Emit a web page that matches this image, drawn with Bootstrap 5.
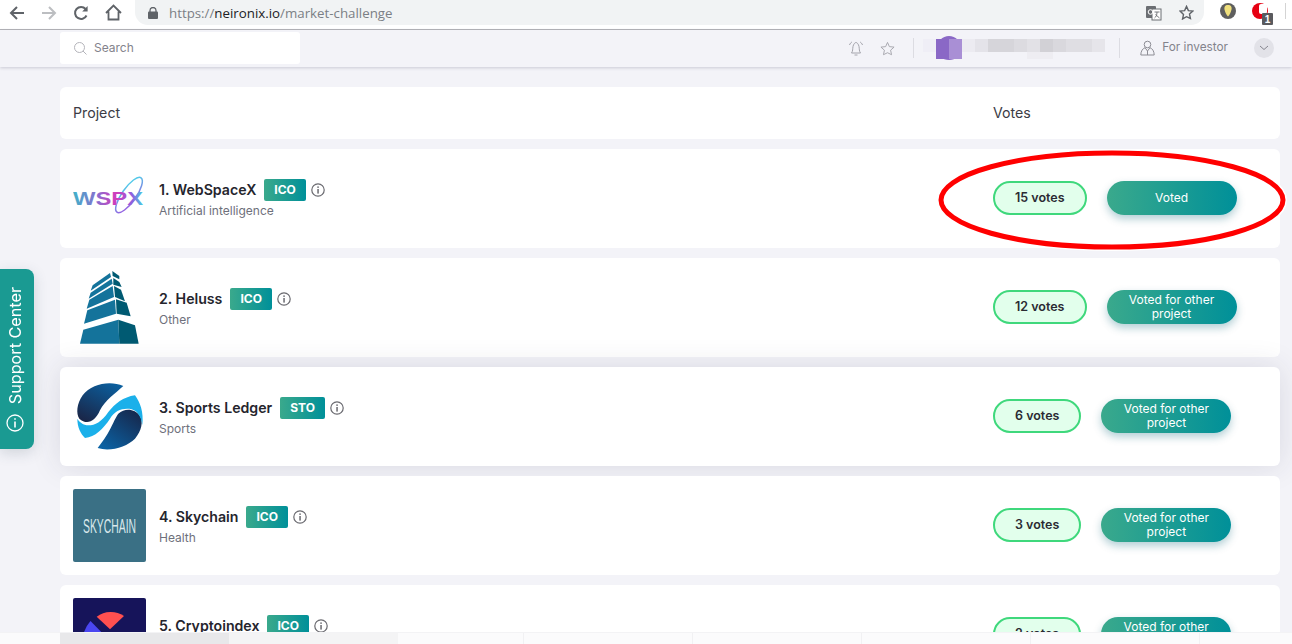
<!DOCTYPE html>
<html lang="en">
<head>
    <meta charset="UTF-8">
    <title>Market challenge</title>
    <link href="https://cdn.jsdelivr.net/npm/bootstrap@5.3.0/dist/css/bootstrap.min.css" rel="stylesheet">
    <style>
        html, body { height: 100%; overflow: hidden; }
        body { background: #f3f3f8; font-family: Inter, "Liberation Sans", sans-serif; color: #2b2b33; }

        /* browser chrome */
        .chrome-bar { height: 30px; background: #fff; border-bottom: 1px solid #b4b4b8; }
        .chrome-nav { padding-left: 1px; }
        .chrome-btn { width: 32px; height: 25px; }
        .omnibox { width: 1069px; height: 25px; margin-left: 6px; background: #f1f3f4; border-radius: 0 0 13px 13px; padding-left: 13px; }
        .omni-url { font: 13.3px "Open Sans", "Liberation Sans", sans-serif; color: #7b7f85; margin-left: 11px; }
        .omni-url b { font-weight: 400; color: #202124; }
        .omni-star { margin-right: 10px; }

        /* app header */
        .app-head { height: 37px; padding: 2px 18px 0 60px; background: #f3f3f8; box-shadow: 0 1px 3px rgba(60, 60, 90, .22); position: relative; z-index: 5; }
        .search-box { width: 240px; height: 32px; background: #fff; border-radius: 3px; padding-left: 14px; gap: 7px; font-size: 12px; color: #83838c; }
        .head-tools { height: 32px; }
        .head-sep { width: 1px; height: 20px; background: #dcdce2; }
        .for-inv { font-size: 11.8px; color: #83838c; margin-right: 26px; }
        .chev-round { width: 20px; height: 20px; border-radius: 50%; background: #e2e2e8; }
        .tool-bell { margin-right: 16px; }
        .tool-star { margin-right: 18px; }
        .tool-sep-a { margin-right: 9px; }
        .tool-user { margin-right: 14px; }
        .tool-sep-b { margin-right: 20px; }
        .tool-person { margin-right: 7px; }

        /* list */
        .market-list { padding: 20px 12px 0 60px; }
        .list-head { height: 52px; padding-left: 13px; font-size: 14.2px; color: #3c3c45; margin-bottom: 10px; }
        .votes-col { width: 287px; flex-shrink: 0; }
        .proj-row { height: 99px; padding-left: 13px; margin-bottom: 10px; position: relative; }
        .proj-row .votes-col { padding-bottom: 2px; }
        .proj-row.lifted { z-index: 1; box-shadow: 0 0 30px rgba(50, 50, 80, .13); }
        .proj-row.above { z-index: 2; }
        .proj-logo { width: 73px; height: 73px; margin-right: 13px; flex-shrink: 0; }
        .proj-text { padding-top: 3px; }
        .proj-name { font-size: 14.15px; font-weight: 600; line-height: 22px; color: #25252d; }
        .proj-tag { height: 22px; padding: 0 10px; margin-left: 8px; border-radius: 2px; font-size: 12px; font-weight: 700; line-height: 22px; color: #fff; background: linear-gradient(90deg, #3aa98c, #009099); }
        .proj-info { margin-left: 5px; }
        .proj-cat { font-size: 12px; line-height: 20px; color: #6e707b; }
        .vote-pill { height: 34px; padding: 0 20px; border: 2px solid #3fd87c; border-radius: 17px; background: #e2ffec; font-size: 12.5px; font-weight: 600; line-height: 30px; color: #2b2b33; }
        .vote-btn { width: 130px; height: 34px; margin-left: 20px; padding: 0 20px; border-radius: 17px; font-size: 12px; line-height: 14px; color: #fff; text-align: center; background: linear-gradient(90deg, #3aa98c, #009099); box-shadow: 0 4px 8px rgba(0, 95, 115, .3); }

        /* overlays */
        .support-tab { position: fixed; left: 0; top: 269px; width: 34px; height: 180px; padding: 18px 4px 0 0; background: #1a9a92; border-radius: 0 8px 8px 0; box-shadow: 0 4px 14px rgba(50, 70, 90, .18); color: #fff; font-size: 16.2px; z-index: 6; }
        .support-tab span { writing-mode: vertical-rl; transform: rotate(180deg); line-height: 1; }
        .support-tab svg { margin-top: 10px; }
        .red-ring { position: fixed; left: 934px; top: 148px; z-index: 7; }
        .tab-strip { position: fixed; left: 0; right: 0; bottom: 0; height: 12px; padding-left: 60px; background: #fbfbfc; border-top: 1px solid #f3f3f5; z-index: 8; }
        .tab-cell { width: 169px; border-right: 1px solid #f1f1f3; }
        .tab-cell.short { width: 126px; }
        .tab-cell.on { background: #e8e8ea; border: 0; }
        .tab-cell.half { background: #f4f4f5; border: 0; }
    </style>
</head>
<body>
    <svg width="0" height="0" class="d-block">
        <symbol id="i-info" viewBox="0 0 14 14">
            <circle cx="7" cy="7" r="6.2" fill="none" stroke="#6a6a70" stroke-width="1.2"/>
            <rect x="6.3" y="6" width="1.5" height="4.6" fill="#6a6a70"/>
            <rect x="6.3" y="3.4" width="1.5" height="1.5" fill="#6a6a70"/>
        </symbol>
    </svg>

    <!-- browser bar -->
    <div class="chrome-bar d-flex align-items-start">
        <div class="chrome-nav d-flex flex-shrink-0">
            <div class="chrome-btn d-flex align-items-center justify-content-center">
                <svg width="16" height="16" viewBox="0 0 16 16" fill="none" stroke="#5f6368" stroke-width="2"><path d="M15 8H2M8 2L2 8l6 6"/></svg>
            </div>
            <div class="chrome-btn d-flex align-items-center justify-content-center">
                <svg width="16" height="16" viewBox="0 0 16 16" fill="none" stroke="#bcbec1" stroke-width="2"><path d="M1 8h13M8 2l6 6-6 6"/></svg>
            </div>
            <div class="chrome-btn d-flex align-items-center justify-content-center">
                <svg width="16" height="16" viewBox="0 0 16 16" fill="none" stroke="#5f6368" stroke-width="2"><path d="M13.5 10.5A6 6 0 1 1 12.6 4"/><path d="M14.6 1v5.4H9.2z" fill="#5f6368" stroke="none"/></svg>
            </div>
            <div class="chrome-btn d-flex align-items-center justify-content-center">
                <svg width="17" height="17" viewBox="0 0 17 17" fill="none" stroke="#5f6368" stroke-width="1.8"><path d="M1 9l7.500-7.500L16 9M3.500 7.500V15.500h10V7.500"/></svg>
            </div>
        </div>
        <div class="omnibox d-flex align-items-center flex-shrink-0">
            <svg width="10" height="12" viewBox="0 0 10 12"><path d="M2 5V3.500a3 3 0 0 1 6 0V5" fill="none" stroke="#5f6368" stroke-width="1.300"/><rect y="4.500" width="10" height="7.500" rx="1" fill="#5f6368"/></svg>
            <span class="omni-url">https://<b>neironix.io</b>/market-challenge</span>
            <div class="ms-auto d-flex align-items-center">
                <svg width="18" height="16" viewBox="0 0 18 16" class="me-3"><rect x="1" y="1" width="10" height="12" rx="1" fill="#6b6e72"/><rect x="7" y="4" width="9" height="11" fill="#fff" stroke="#6b6e72"/><circle cx="5.500" cy="7" r="2.300" fill="none" stroke="#fff"/><path d="M9.500 7h5M12 7c0 3-1 5-2.500 6M10.500 9.500l4 3.500" stroke="#6b6e72" fill="none" stroke-width=".9"/></svg>
                <svg class="omni-star" width="15" height="15" viewBox="0 0 16 16"><path d="M8 1.500l2 4.500 4.800.5-3.600 3.200 1 4.700L8 12.500l-4.200 2.400 1-4.700L1.200 6.500 6 6z" fill="none" stroke="#5f6368" stroke-width="1.500"/></svg>
            </div>
        </div>
        <svg class="flex-shrink-0" width="88" height="28" viewBox="0 0 88 28">
            <circle cx="24" cy="11" r="8" fill="#5e5e5e"/>
            <path d="M24 5c3 0 4 2 3.500 4.500S25.500 15 24 16.500C22.500 15 21 12 20.500 9.500S21 5 24 5z" fill="#f0e07c"/>
            <circle cx="56" cy="11" r="8" fill="#e60012"/>
            <rect x="55" y="4" width="8" height="10" rx="2" fill="#fff"/>
            <rect x="58" y="13" width="11" height="12" rx="1" fill="#5a5a5e"/>
            <text x="63.500" y="23" font-size="10" font-family="Liberation Sans, sans-serif" font-weight="700" fill="#fff" text-anchor="middle">1</text>
            <rect x="81" y="3" width="1" height="16" fill="#d4d4d4"/>
        </svg>
    </div>

    <!-- app header -->
    <header class="app-head d-flex align-items-start">
        <div class="search-box d-flex align-items-center">
            <svg width="13" height="13" viewBox="0 0 13 13" fill="none" stroke="#b4b4ba"><circle cx="5.500" cy="5.500" r="5"/><path d="M9 9l3.500 3.500"/></svg>
            <span>Search</span>
        </div>
        <div class="head-tools ms-auto d-flex align-items-center">
            <svg class="tool-bell" width="16" height="16" viewBox="0 0 16 16" fill="none" stroke="#a4a4ac"><path d="M3.500 13c1.500-2 1-4 1.500-6.500S7 2.500 8 2.500s2.500 1.500 3 4 0 4.500 1.500 6.500zM6.500 15h3M1.500 5C2 3.500 3 2.500 4 2M14.500 5C14 3.500 13 2.500 12 2"/></svg>
            <svg class="tool-star" width="15" height="15" viewBox="0 0 16 16" fill="none" stroke="#a4a4ac"><path d="M8 1.500l2 4.500 5 .5-3.700 3.300 1 4.800L8 12.500l-4.300 2.100 1-4.800L1 6.500 6 6z"/></svg>
            <div class="head-sep tool-sep-a"></div>
            <svg class="tool-user" width="182" height="24" viewBox="0 0 182 24">
                <circle cx="26" cy="12" r="12" fill="#8a68c6"/>
                <rect y="3" width="13" height="13" fill="#efeef6"/>
                <rect x="13" y="3" width="13" height="13" fill="#8a68c6"/>
                <rect x="26" y="3" width="13" height="13" fill="#a98fd5"/>
                <rect x="13" y="16" width="13" height="7" fill="#8a68c6"/>
                <rect x="26" y="16" width="13" height="7" fill="#a98fd5"/>
                <rect x="39" y="3" width="13" height="13" fill="#ecebf1"/>
                <rect x="52" y="3" width="13" height="13" fill="#e4e3e9"/>
                <rect x="65" y="3" width="39" height="13" fill="#d6d5da"/>
                <rect x="91" y="3" width="13" height="13" fill="#dcdbe0"/>
                <rect x="104" y="3" width="13" height="13" fill="#e2e1e6"/>
                <rect x="117" y="3" width="13" height="13" fill="#d2d1d6"/>
                <rect x="130" y="3" width="13" height="13" fill="#d9d8dd"/>
                <rect x="143" y="3" width="26" height="13" fill="#dfdee3"/>
                <rect x="169" y="3" width="13" height="13" fill="#e6e5ea"/>
                <rect x="104" y="16" width="26" height="7" fill="#eeedf2"/>
            </svg>
            <div class="head-sep tool-sep-b"></div>
            <svg class="tool-person" width="15" height="16" viewBox="0 0 15 16" fill="none" stroke="#8d8d95"><circle cx="7.500" cy="4.500" r="3.300"/><path d="M.8 15c0-4 2-6.500 4.200-7.300L7.500 11 10 7.700c2.200.8 4.200 3.300 4.200 7.300zM7.500 11v4"/></svg>
            <span class="for-inv">For investor</span>
            <div class="chev-round d-flex align-items-center justify-content-center">
                <svg width="10" height="6" viewBox="0 0 10 6" fill="none" stroke="#85858e"><path d="M1 1l4 3.500L9 1"/></svg>
            </div>
        </div>
    </header>

    <!-- project list -->
    <main class="market-list">
        <div class="list-head d-flex align-items-center bg-white rounded">
            <div class="flex-grow-1">Project</div>
            <div class="votes-col">Votes</div>
        </div>

        <div class="proj-row d-flex align-items-center bg-white rounded">
            <svg class="proj-logo" viewBox="0 0 73 73">
                <defs>
                    <linearGradient id="wspx-fill" x1="0" x2="1" y1="0" y2="0">
                        <stop offset="0" stop-color="#3fb3c9"/><stop offset=".35" stop-color="#8a6ccf"/>
                        <stop offset=".62" stop-color="#d23cbb"/><stop offset=".85" stop-color="#8b62e0"/><stop offset="1" stop-color="#45cfe2"/>
                    </linearGradient>
                    <linearGradient id="wspx-orbit" x1="1" x2="0" y1="0" y2="1">
                        <stop offset="0" stop-color="#45e0ea"/><stop offset="1" stop-color="#a24fe0"/>
                    </linearGradient>
                </defs>
                <ellipse cx="56" cy="33" rx="21" ry="7" transform="rotate(-55 56 33)" fill="none" stroke="url(#wspx-orbit)" stroke-width="1.500"/>
                <text x="0" y="43" font-family="Liberation Sans, sans-serif" font-weight="700" font-size="18" fill="url(#wspx-fill)" textLength="70" lengthAdjust="spacingAndGlyphs">WSPX</text>
            </svg>
            <div class="proj-text flex-grow-1">
                <div class="d-flex align-items-center">
                    <span class="proj-name">1. WebSpaceX</span>
                    <span class="proj-tag">ICO</span>
                    <svg class="proj-info" width="14" height="14"><use href="#i-info"/></svg>
                </div>
                <div class="proj-cat">Artificial intelligence</div>
            </div>
            <div class="votes-col d-flex align-items-center">
                <div class="vote-pill">15 votes</div>
                <div class="vote-btn d-flex align-items-center justify-content-center">Voted</div>
            </div>
        </div>

        <div class="proj-row d-flex align-items-center bg-white rounded">
            <svg class="proj-logo" viewBox="0 0 73 73">
                <g transform="translate(-13,-9) scale(.3333)">
                    <g fill="#14739b">
                        <polygon points="60,245 70,203 175,173 178,245"/>
                        <polygon points="72,185 82,145 165,113 168,155"/>
                        <polygon points="80,140 88,113 158,72 162,105"/>
                        <polygon points="86,110 92,92 155,50 158,65"/>
                        <polygon points="92,86 98,70 150,33 153,45"/>
                    </g>
                    <g fill="#005a72">
                        <polygon points="175,173 225,190 236,245 178,245"/>
                        <polygon points="168,112 200,122 212,163 170,155"/>
                        <polygon points="162,72 183,83 195,118 165,105"/>
                        <polygon points="160,48 178,60 185,75 160,68"/>
                        <polygon points="157,27 178,42 178,52 158,42"/>
                    </g>
                </g>
            </svg>
            <div class="proj-text flex-grow-1">
                <div class="d-flex align-items-center">
                    <span class="proj-name">2. Heluss</span>
                    <span class="proj-tag">ICO</span>
                    <svg class="proj-info" width="14" height="14"><use href="#i-info"/></svg>
                </div>
                <div class="proj-cat">Other</div>
            </div>
            <div class="votes-col d-flex align-items-center">
                <div class="vote-pill">12 votes</div>
                <div class="vote-btn d-flex align-items-center justify-content-center">Voted for other project</div>
            </div>
        </div>

        <div class="proj-row lifted d-flex align-items-center bg-white rounded">
            <svg class="proj-logo" viewBox="0 0 73 73">
                <defs>
                    <linearGradient id="sl-top" x1=".8" x2=".2" y1="0" y2="1"><stop offset="0" stop-color="#0b5f9e"/><stop offset="1" stop-color="#1a2648"/></linearGradient>
                    <linearGradient id="sl-bot" x1=".9" x2=".1" y1="0" y2="1"><stop offset="0" stop-color="#16264a"/><stop offset="1" stop-color="#0b64a6"/></linearGradient>
                </defs>
                <g transform="translate(-13,-118) scale(.3333)">
                    <path d="M190 372C150 355 95 365 68 400 50 425 48 455 58 470 80 490 105 480 120 445 135 415 165 395 190 372Z" fill="url(#sl-top)"/>
                    <path d="M113 558C150 570 200 555 225 530 245 505 250 480 240 462 225 440 195 437 175 455 160 475 155 505 113 558Z" fill="url(#sl-bot)"/>
                    <path d="M52 470C52 495 62 515 75 528 105 525 130 500 150 470 165 445 190 437 215 442 235 447 245 470 247 490 252 450 240 420 225 400 190 405 165 425 145 450 125 480 105 490 85 490 70 490 58 480 52 470Z" fill="#1bb0ea"/>
                </g>
            </svg>
            <div class="proj-text flex-grow-1">
                <div class="d-flex align-items-center">
                    <span class="proj-name">3. Sports Ledger</span>
                    <span class="proj-tag">STO</span>
                    <svg class="proj-info" width="14" height="14"><use href="#i-info"/></svg>
                </div>
                <div class="proj-cat">Sports</div>
            </div>
            <div class="votes-col d-flex align-items-center">
                <div class="vote-pill">6 votes</div>
                <div class="vote-btn d-flex align-items-center justify-content-center">Voted for other project</div>
            </div>
        </div>

        <div class="proj-row above d-flex align-items-center bg-white rounded">
            <svg class="proj-logo" viewBox="0 0 73 73">
                <rect width="73" height="73" rx="2" fill="#3a7085"/>
                <text x="10" y="44" font-family="Liberation Sans, sans-serif" font-size="20" fill="#d9e8ec" textLength="53" lengthAdjust="spacingAndGlyphs">SKYCHAIN</text>
            </svg>
            <div class="proj-text flex-grow-1">
                <div class="d-flex align-items-center">
                    <span class="proj-name">4. Skychain</span>
                    <span class="proj-tag">ICO</span>
                    <svg class="proj-info" width="14" height="14"><use href="#i-info"/></svg>
                </div>
                <div class="proj-cat">Health</div>
            </div>
            <div class="votes-col d-flex align-items-center">
                <div class="vote-pill">3 votes</div>
                <div class="vote-btn d-flex align-items-center justify-content-center">Voted for other project</div>
            </div>
        </div>

        <div class="proj-row above d-flex align-items-center bg-white rounded">
            <svg class="proj-logo" viewBox="0 0 73 73">
                <rect width="73" height="73" rx="2" fill="#16145a"/>
                <path d="M23.700 18.700A24 24 0 0 1 51 18L37 31.300Z" fill="#ff5050"/>
                <path d="M17.500 23L40 46H10A30 30 0 0 1 17.500 23Z" fill="#4a46f0"/>
            </svg>
            <div class="proj-text flex-grow-1">
                <div class="d-flex align-items-center">
                    <span class="proj-name">5. Cryptoindex</span>
                    <span class="proj-tag">ICO</span>
                    <svg class="proj-info" width="14" height="14"><use href="#i-info"/></svg>
                </div>
                <div class="proj-cat">&nbsp;</div>
            </div>
            <div class="votes-col d-flex align-items-center">
                <div class="vote-pill">2 votes</div>
                <div class="vote-btn d-flex align-items-center justify-content-center">Voted for other project</div>
            </div>
        </div>
    </main>

    <!-- support tab -->
    <div class="support-tab d-flex flex-column align-items-center">
        <span>Support Center</span>
        <svg width="18" height="18" viewBox="0 0 18 18" fill="none" stroke="#fff" stroke-width="1.300"><circle cx="9" cy="9" r="8"/><path d="M9 7.500v6M9 4.300v1.500" stroke-width="1.600"/></svg>
    </div>

    <!-- hand drawn annotation -->
    <svg class="red-ring" width="356" height="106" viewBox="0 0 356 106" fill="none">
        <ellipse cx="178" cy="52" rx="171" ry="47" stroke="#fff" stroke-width="8"/>
        <ellipse cx="178" cy="52" rx="171" ry="47" stroke="#f00" stroke-width="5"/>
    </svg>

    <!-- bottom strip -->
    <div class="tab-strip d-flex">
        <div class="tab-cell on"></div>
        <div class="tab-cell half"></div>
        <div class="tab-cell short"></div>
        <div class="tab-cell"></div>
        <div class="tab-cell"></div>
        <div class="tab-cell"></div>
        <div class="tab-cell"></div>
    </div>
</body>
</html>
